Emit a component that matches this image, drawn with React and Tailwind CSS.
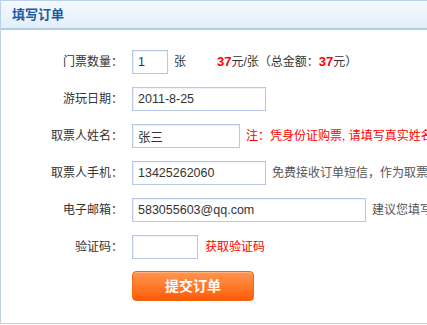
import React from "react";

const font = { fontFamily: '"Liberation Sans", "Noto Sans CJK SC", sans-serif' };

function Field({ w, value }) {
  return (
    <input
      readOnly
      value={value}
      className="h-[24px] shrink-0 border border-[#b7c6e5] bg-white px-[5px] text-[12.5px] text-[#333] outline-none shadow-[inset_1px_1px_0_#eef2f9]"
      style={{ width: w, fontFamily: '"Liberation Sans", "Noto Sans CJK SC", sans-serif' }}
    />
  );
}

function Row({ label, children }) {
  return (
    <div className="flex h-[24px] items-center whitespace-nowrap">
      <div className="w-[122px] shrink-0 text-right text-[12px] text-[#333]">{label}</div>
      <div className="ml-[9px] flex items-center">{children}</div>
    </div>
  );
}

export default function App() {
  return (
    <div className="h-[325px] w-[427px] overflow-hidden bg-white [text-spacing-trim:space-all]" style={font}>
      <div className="h-[324px] w-[440px] border-b border-l border-t border-[#b9d2ea]">
        <div className="flex h-[29px] items-center border-b-2 border-[#aecde7] bg-gradient-to-b from-[#f5f9fe] to-[#e3eef9] pl-[11px]">
          <span className="text-[13px] font-bold text-[#1b5aa5]">填写订单</span>
        </div>
        <div className="flex flex-col gap-[13px] pt-[20px]">
          <Row label="门票数量：">
            <Field w={36} value="1" />
            <span className="ml-[6px] text-[12px] text-[#333]">张</span>
            <span className="ml-[31px] text-[12px] text-[#333]">
              <b className="text-[13px] text-[#ff0000]">37</b>元/张（总金额：<b className="text-[13px] text-[#ff0000]">37</b>元）
            </span>
          </Row>
          <Row label="游玩日期：">
            <Field w={134} value="2011-8-25" />
          </Row>
          <Row label="取票人姓名：">
            <Field w={108} value="张三" />
            <span className="ml-[6px] text-[12px] text-[#ff0000]">注：凭身份证购票, 请填写真实姓名</span>
          </Row>
          <Row label="取票人手机：">
            <Field w={134} value="13425262060" />
            <span className="ml-[6px] text-[12px] text-[#555]">免费接收订单短信，作为取票凭证</span>
          </Row>
          <Row label="电子邮箱：">
            <Field w={234} value="583055603@qq.com" />
            <span className="ml-[6px] text-[12px] text-[#555]">建议您填写常用邮箱</span>
          </Row>
          <Row label="验证码：">
            <Field w={66} value="" />
            <span className="ml-[7px] text-[12px] text-[#ff0000]">获取验证码</span>
          </Row>
          <div className="ml-[131px] mt-[-1px]">
            <button className="flex h-[30px] w-[122px] items-center justify-center rounded-[4px] border border-[#f26a10] bg-gradient-to-b from-[#ff9650] via-[#ff7a2a] to-[#ff5a00] text-[14px] font-bold text-white shadow-[inset_0_1px_0_#ffb27e]">
              提交订单
            </button>
          </div>
        </div>
      </div>
    </div>
  );
}
